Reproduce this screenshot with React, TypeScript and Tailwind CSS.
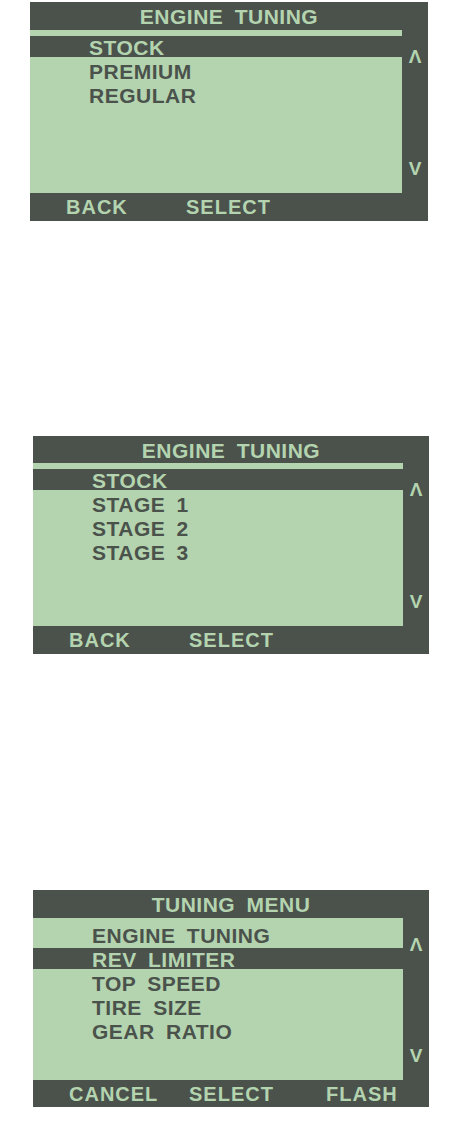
import React from 'react';

const DARK = 'bg-[#4a524b]';

type ScreenProps = {
    title: string;
    items: string[];
    active: number;
    footer: string[];
    titleH: string;
    midH: string;
    footH: string;
    className: string;
};

const LcdScreen = ({ title, items, active, footer, titleH, midH, footH, className }: ScreenProps) => {
    return (
        <div className={`${DARK} flex flex-col font-bold ${className}`}>
            {/* title */}
            <div className={`${titleH} flex items-center justify-center pt-[2px] text-[21px] tracking-[0.5px] [word-spacing:5px] text-[#b4d4b0] whitespace-nowrap`}>
                {title}
            </div>
            {/* list + arrows */}
            <div className={`${midH} flex`}>
                <div className="flex-1 bg-[#b4d4b0] pt-[6px]">
                    {items.map((item, i) => (
                        <div key={item} className="h-6">
                            <div
                                className={`h-[21px] pl-[59px] text-[21px] leading-6 tracking-[0.5px] [word-spacing:5px] whitespace-nowrap ${i === active ? 'bg-[#4a524b] text-[#b4d4b0]' : 'text-[#4a524b]'}`}
                            >
                                {item}
                            </div>
                        </div>
                    ))}
                </div>
                <div className="w-[26px] flex flex-col items-center pt-[17px] pb-[15px] text-[19px] leading-none text-[#b4d4b0]">
                    <span>Λ</span>
                    <span className="mt-auto">V</span>
                </div>
            </div>
            {/* soft keys */}
            <div className={`${footH} flex items-center pl-9 text-[20px] tracking-[1px] text-[#b4d4b0] whitespace-nowrap`}>
                <span className="w-[120px]">{footer[0]}</span>
                <span className="w-[137px]">{footer[1]}</span>
                {footer[2] && <span>{footer[2]}</span>}
            </div>
        </div>
    );
};

const App = () => {
    return (
        <div className="w-[458px] h-[1134px] bg-white overflow-hidden font-['Liberation_Sans',Arial,sans-serif]">
            <LcdScreen
                className="mt-[2px] ml-[30px] w-[398px]"
                title="ENGINE TUNING"
                items={['STOCK', 'PREMIUM', 'REGULAR']}
                active={0}
                footer={['BACK', 'SELECT']}
                titleH="h-7"
                midH="h-[163px]"
                footH="h-7"
            />
            <LcdScreen
                className="mt-[215px] ml-[33px] w-[396px]"
                title="ENGINE TUNING"
                items={['STOCK', 'STAGE 1', 'STAGE 2', 'STAGE 3']}
                active={0}
                footer={['BACK', 'SELECT']}
                titleH="h-[27px]"
                midH="h-[163px]"
                footH="h-7"
            />
            <LcdScreen
                className="mt-[236px] ml-[33px] w-[396px]"
                title="TUNING MENU"
                items={['ENGINE TUNING', 'REV LIMITER', 'TOP SPEED', 'TIRE SIZE', 'GEAR RATIO']}
                active={1}
                footer={['CANCEL', 'SELECT', 'FLASH']}
                titleH="h-7"
                midH="h-[162px]"
                footH="h-[27px]"
            />
        </div>
    );
};

export default App;
